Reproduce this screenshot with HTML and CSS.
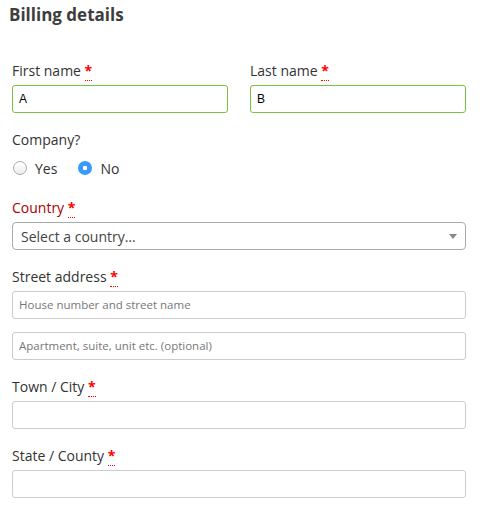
FILE: index.html
```html
<!DOCTYPE html>
<html>
<head>
<meta charset="utf-8">
<link rel="stylesheet" href="styles.css">
</head>
<body>
<form class="billing">
  <h3 class="title">Billing details</h3>
  <div class="row">
    <div class="field half">
      <label class="lbl">First name <abbr class="req" title="required">*</abbr></label>
      <input class="inp valid" type="text" value="A">
    </div>
    <div class="field half">
      <label class="lbl">Last name <abbr class="req" title="required">*</abbr></label>
      <input class="inp valid" type="text" value="B">
    </div>
  </div>
  <div class="field company">
    <label class="lbl">Company?</label>
    <div class="radios">
      <label class="radio"><input type="radio" name="co" class="rad"> Yes</label>
      <label class="radio"><input type="radio" name="co" class="rad" checked> No</label>
    </div>
  </div>
  <div class="field country">
    <label class="lbl invalid">Country <abbr class="req" title="required">*</abbr></label>
    <div class="select">
      <span class="sel-text">Select a country…</span>
      <span class="sel-arrow"></span>
    </div>
  </div>
  <div class="field street">
    <label class="lbl">Street address <abbr class="req" title="required">*</abbr></label>
    <input class="inp plain" type="text" placeholder="House number and street name">
    <input class="inp plain second" type="text" placeholder="Apartment, suite, unit etc. (optional)">
  </div>
  <div class="field town">
    <label class="lbl">Town / City <abbr class="req" title="required">*</abbr></label>
    <input class="inp plain" type="text">
  </div>
  <div class="field state">
    <label class="lbl">State / County <abbr class="req" title="required">*</abbr></label>
    <input class="inp plain" type="text">
  </div>
</form>
</body>
</html>
```
FILE: styles.css
```css
* { box-sizing: border-box; }
html, body { margin: 0; padding: 0; background: #fff; }
body {
  font-family: "Open Sans", "Noto Sans", sans-serif;
  color: #3c3c3c;
  width: 483px;
}
.billing { padding: 0 17px 0 12px; }
.title {
  margin: 0 0 0 -3px;
  padding-top: 3px;
  font-size: 17px;
  line-height: 24px;
  font-weight: 700;
  color: #3d3d3d;
}
.row { display: flex; gap: 22px; margin-top: 34px; }
.half { flex: 1; }
.field { display: flex; flex-direction: column; }
.lbl {
  font-size: 14px;
  line-height: 20px;
  color: #333;
  margin-bottom: 4px;
}
.lbl.invalid { color: #a00; }
.req {
  color: #f00;
  font-weight: 700;
  text-decoration: none;
  border-bottom: 1px dotted #f00;
  cursor: help;
}
.inp {
  height: 28px;
  border: 1px solid #ccc;
  border-radius: 3px;
  padding: 0 6px;
  font-family: "Liberation Sans", Arial, sans-serif;
  font-size: 12px;
  color: #000;
  background: #fff;
  outline: none;
}
.inp::placeholder {
  font-family: "Open Sans", sans-serif;
  font-size: 11.5px;
  color: #777;
}
.inp.valid { border-color: #7ac142; }
.company { margin-top: 17px; }
.radios { display: flex; gap: 20px; margin-top: 4px; height: 20px; align-items: center; }
.radio { display: flex; align-items: center; gap: 8px; font-size: 14px; color: #333; }
.rad {
  -webkit-appearance: none;
  appearance: none;
  width: 14px;
  height: 14px;
  margin: 0 0 0 1px;
  border-radius: 50%;
  border: 1px solid #aaa;
  background: linear-gradient(#fff, #eee);
}
.rad:checked {
  border: none;
  background: radial-gradient(circle, #fff 0 2px, #3b99fc 2.5px);
}
.country { margin-top: 20px; }
.select {
  height: 28px;
  border: 1px solid #aaa;
  border-radius: 4px;
  display: flex;
  align-items: center;
  justify-content: space-between;
  padding: 0 8px 0 8px;
}
.sel-text { font-size: 14px; color: #444; }
.sel-arrow {
  width: 0; height: 0;
  border-left: 4px solid transparent;
  border-right: 4px solid transparent;
  border-top: 5px solid #888;
}
.street { margin-top: 17px; }
.second { margin-top: 13px; }
.town { margin-top: 17px; }
.state { margin-top: 17px; }
```
